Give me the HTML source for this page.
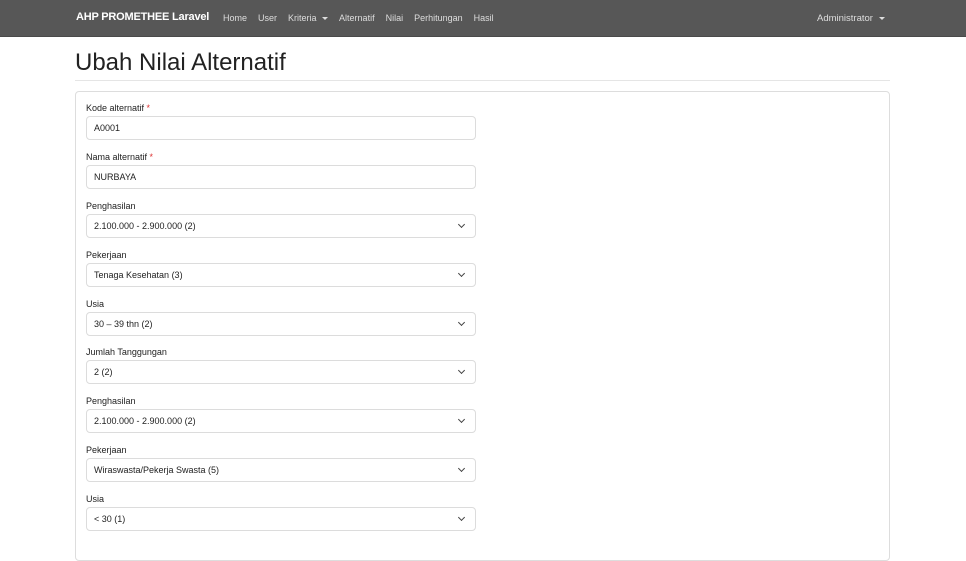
<!DOCTYPE html>
<html><head><style>
*{box-sizing:border-box;margin:0;padding:0}
body{width:966px;height:543px;overflow:hidden;background:#fff;font-family:"Liberation Sans",sans-serif;color:#212529}
.nav{height:37px;background:#575757;position:relative;border-bottom:1px solid #4a4a4a}
.brand{position:absolute;left:76px;top:11px;color:#fff;font-size:11px;font-weight:bold;letter-spacing:-0.2px}
.links{position:absolute;left:223px;top:13px;font-size:9px;color:#ddd;white-space:nowrap}
.links span{margin-right:11px}
.admin{position:absolute;left:817px;top:13px;font-size:9.5px;color:#ddd}
.caret{display:inline-block;width:0;height:0;border-left:3px solid transparent;border-right:3px solid transparent;border-top:3px solid #ddd;vertical-align:middle;margin-left:3px}
h1{position:absolute;left:75px;top:49px;font-weight:400;font-size:24px;color:#222}
.hr{position:absolute;left:75px;top:80px;width:815px;height:1px;background:#e5e5e5}
.card{position:absolute;left:75px;top:91px;width:815px;height:470px;border:1px solid #ddd;border-radius:4px}
.g{position:absolute;left:86px;width:390px}
.g label{display:block;font-size:9px;height:11px;color:#222}
.g label b{color:#d33;font-weight:400}
.in{margin-top:2px;height:24px;border:1px solid #dcdcdc;border-radius:4px;font-size:9px;padding:6px 7px;position:relative;color:#222}
.sel:after{content:"";position:absolute;right:11px;top:7px;width:4px;height:4px;border-right:1px solid #444;border-bottom:1px solid #444;transform:rotate(45deg)}
</style></head><body>
<div class="nav"><div class="brand">AHP PROMETHEE Laravel</div>
<div class="links"><span>Home</span><span>User</span><span>Kriteria <i class="caret"></i></span><span>Alternatif</span><span>Nilai</span><span>Perhitungan</span><span>Hasil</span></div>
<div class="admin">Administrator <i class="caret"></i></div></div>
<h1>Ubah Nilai Alternatif</h1><div class="hr"></div>
<div class="card"></div>
<div class="g" style="top:103px"><label>Kode alternatif <b>*</b></label><div class="in">A0001</div></div>
<div class="g" style="top:152px"><label>Nama alternatif <b>*</b></label><div class="in">NURBAYA</div></div>
<div class="g" style="top:201px"><label>Penghasilan</label><div class="in sel">2.100.000 - 2.900.000 (2)</div></div>
<div class="g" style="top:250px"><label>Pekerjaan</label><div class="in sel">Tenaga Kesehatan (3)</div></div>
<div class="g" style="top:299px"><label>Usia</label><div class="in sel">30 – 39 thn (2)</div></div>
<div class="g" style="top:347px"><label>Jumlah Tanggungan</label><div class="in sel">2 (2)</div></div>
<div class="g" style="top:396px"><label>Penghasilan</label><div class="in sel">2.100.000 - 2.900.000 (2)</div></div>
<div class="g" style="top:445px"><label>Pekerjaan</label><div class="in sel">Wiraswasta/Pekerja Swasta (5)</div></div>
<div class="g" style="top:494px"><label>Usia</label><div class="in sel">&lt; 30 (1)</div></div>
</body></html>
